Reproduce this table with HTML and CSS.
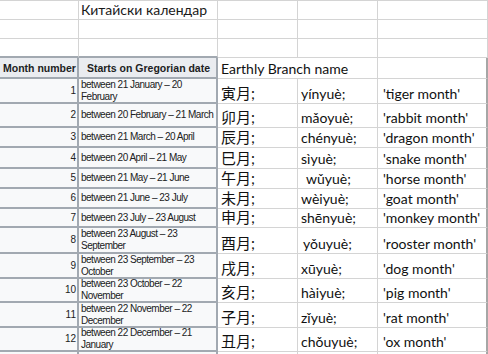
FILE: index.html
```html
<!DOCTYPE html>
<html lang="bg">
<head>
<meta charset="utf-8">
<title>Китайски календар</title>
<link rel="stylesheet" href="styles.css">
</head>
<body>
<div class="sheet">
  <div class="c"></div><div class="c title">Китайски календар</div><div class="c"></div><div class="c"></div><div class="c"></div>
  <div class="c"></div><div class="c"></div><div class="c"></div><div class="c"></div><div class="c"></div>
  <div class="c top"></div><div class="c top"></div><div class="c"></div><div class="c"></div><div class="c"></div>

  <div class="w wh">Month number</div><div class="w wh">Starts on Gregorian date</div><div class="c span2">Earthly Branch name</div><div class="c e"></div>

  <div class="w num">1</div><div class="w">between 21 January – 20 February</div><div class="c cjk">寅月;</div><div class="c py">yínyuè;</div><div class="c e">'tiger month'</div>
  <div class="w num">2</div><div class="w">between 20 February – 21 March</div><div class="c cjk">卯月;</div><div class="c py">mǎoyuè;</div><div class="c e">'rabbit month'</div>
  <div class="w num">3</div><div class="w">between 21 March – 20 April</div><div class="c cjk">辰月;</div><div class="c py">chényuè;</div><div class="c e">'dragon month'</div>
  <div class="w num">4</div><div class="w">between 20 April – 21 May</div><div class="c cjk">巳月;</div><div class="c py">sìyuè;</div><div class="c e">'snake month'</div>
  <div class="w num">5</div><div class="w">between 21 May – 21 June</div><div class="c cjk">午月;</div><div class="c py ind">wǔyuè;</div><div class="c e">'horse month'</div>
  <div class="w num">6</div><div class="w">between 21 June – 23 July</div><div class="c cjk">未月;</div><div class="c py">wèiyuè;</div><div class="c e">'goat month'</div>
  <div class="w num">7</div><div class="w">between 23 July – 23 August</div><div class="c cjk">申月;</div><div class="c py">shēnyuè;</div><div class="c e">'monkey month'</div>
  <div class="w num">8</div><div class="w">between 23 August – 23 September</div><div class="c cjk">酉月;</div><div class="c py ind2">yǒuyuè;</div><div class="c e">'rooster month'</div>
  <div class="w num">9</div><div class="w">between 23 September – 23 October</div><div class="c cjk">戌月;</div><div class="c py">xūyuè;</div><div class="c e">'dog month'</div>
  <div class="w num">10</div><div class="w">between 23 October – 22 November</div><div class="c cjk">亥月;</div><div class="c py">hàiyuè;</div><div class="c e">'pig month'</div>
  <div class="w num">11</div><div class="w">between 22 November – 22 December</div><div class="c cjk">子月;</div><div class="c py">zǐyuè;</div><div class="c e">'rat month'</div>
  <div class="w num">12</div><div class="w">between 22 December – 21 January</div><div class="c cjk">丑月;</div><div class="c py">chǒuyuè;</div><div class="c e">'ox month'</div>

  <div class="w"></div><div class="w"></div><div class="c"></div><div class="c"></div><div class="c e"></div>
</div>
</body>
</html>
```

FILE: styles.css
```css
html, body {
  margin: 0;
  padding: 0;
  background: #ffffff;
}

.sheet {
  display: grid;
  grid-template-columns: 79px 139px 80px 80px 110px;
  grid-template-rows: 19px 19px 19px 21px 25px 24px 20px 21px 20px 20px 19px 26px 25px 24px 25px 24px 8px;
  width: 488px;
  border-top: 1px solid #d4d4d4;
  font-family: Lato, "Noto Sans CJK SC", sans-serif;
  color: #111111;
}

.c {
  display: flex;
  align-items: flex-end;
  padding: 0 3px 1px 3px;
  border-right: 1px solid #d4d4d4;
  border-bottom: 1px solid #d4d4d4;
  font-size: 14px;
  line-height: 17px;
  white-space: nowrap;
  min-width: 0;
}

.c.top {
  border-bottom: 2px solid #a2a9b1;
}

.title {
  padding-left: 2px;
  padding-bottom: 1px;
  color: #1a1a1a;
}

.span2 {
  grid-column: span 2;
}

.cjk {
  font-size: 15px;
  padding-left: 3px;
  padding-bottom: 1px;
}

.py {
  padding-left: 3px;
}

.py.ind {
  padding-left: 8px;
}

.py.ind2 {
  padding-left: 5px;
}

.c.e {
  padding-left: 5px;
  border-right: 2px solid #a6a6a6;
}

.w {
  display: flex;
  align-items: center;
  padding: 0 0 0 2px;
  background: #f8f9fa;
  border-right: 2px solid #a2a9b1;
  border-bottom: 2px solid #a2a9b1;
  font-family: "Liberation Sans", Arial, sans-serif;
  font-size: 10px;
  letter-spacing: -0.5px;
  line-height: 12px;
  color: #202122;
  min-width: 0;
}

.wh {
  background: #eaecf0;
  justify-content: center;
  font-weight: bold;
  font-size: 10.5px;
  letter-spacing: 0;
  white-space: nowrap;
}

.num {
  justify-content: flex-end;
  padding-right: 1px;
  letter-spacing: 0;
}
```
